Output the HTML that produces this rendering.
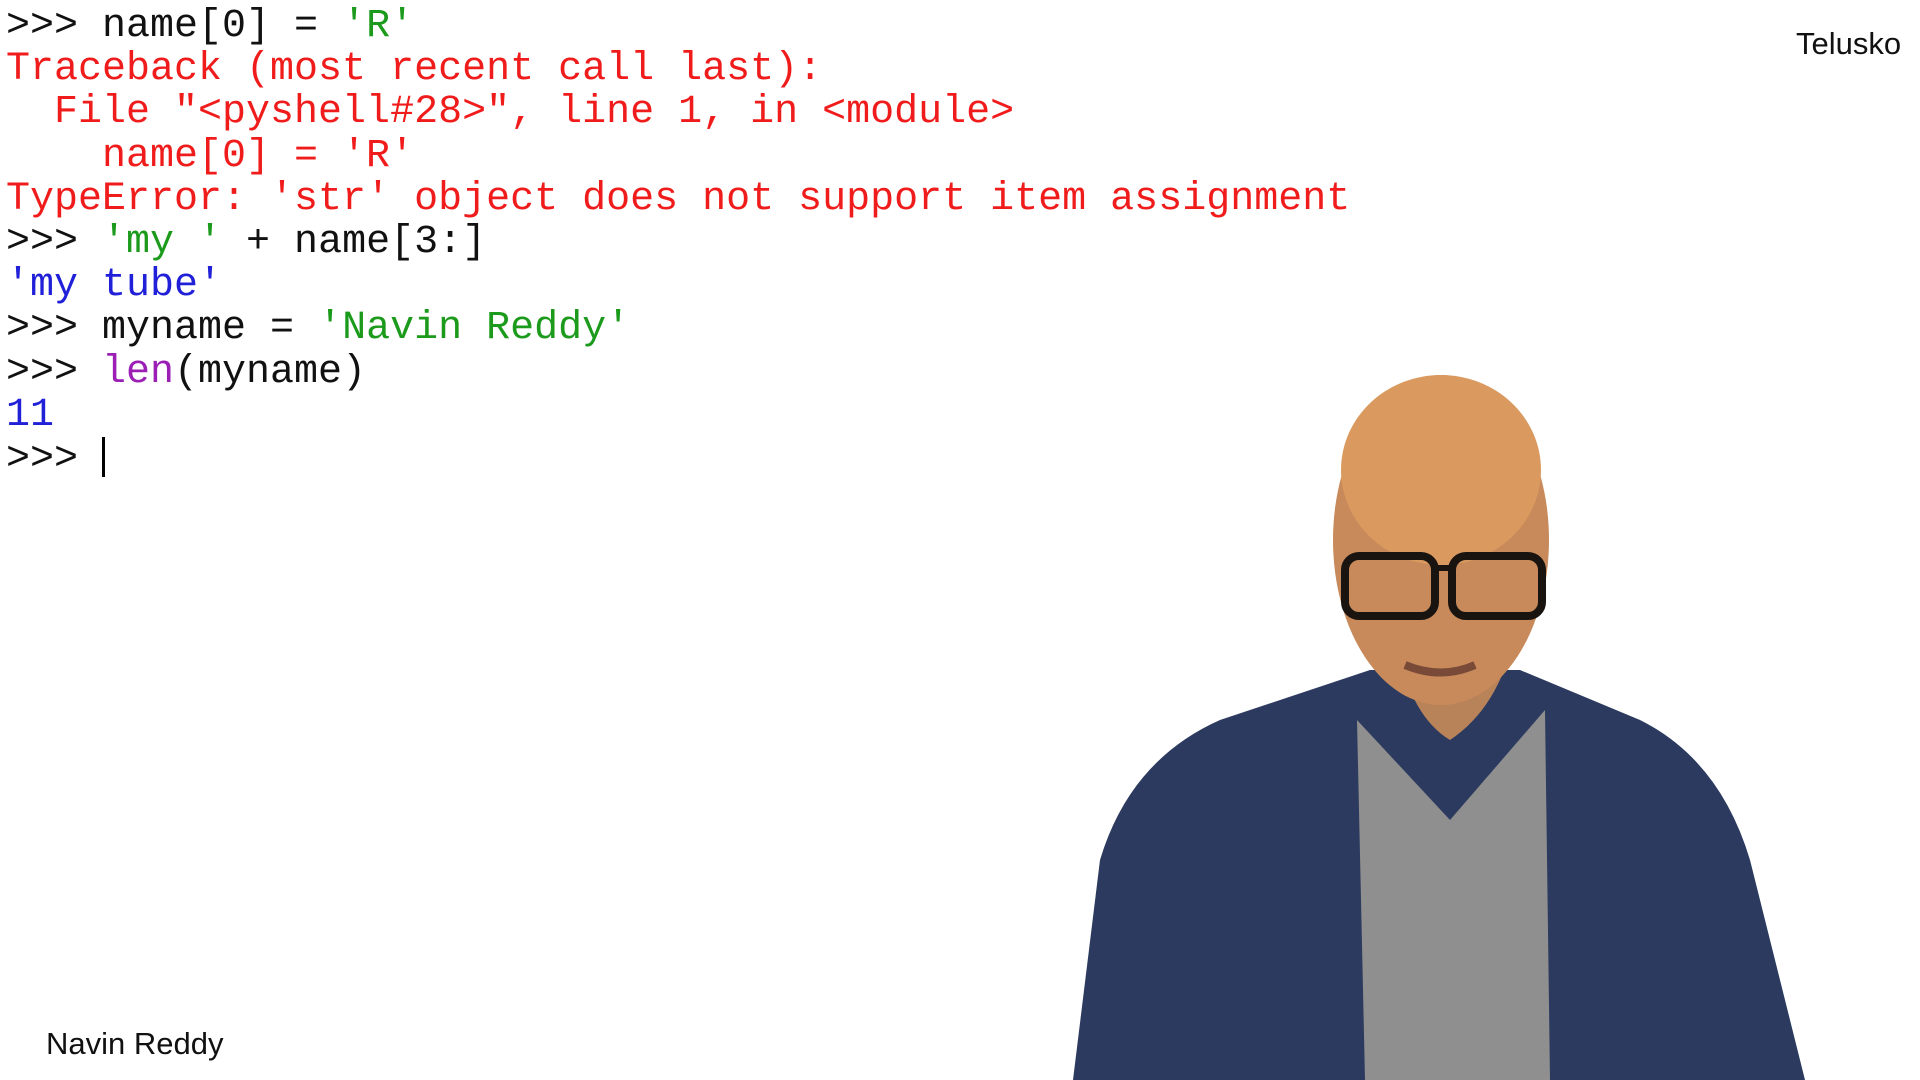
<!DOCTYPE html>
<html><head><meta charset="utf-8"><style>
html,body{margin:0;padding:0;width:1920px;height:1080px;background:#fff;overflow:hidden;position:relative}
pre{position:absolute;left:6px;top:5px;margin:0;font-family:"Liberation Mono",monospace;font-size:40px;line-height:43.2px;color:#111}
.r{color:#f01c1c}.g{color:#1b9a1b}.b{color:#2020d8}.p{color:#9b1fb5}
.lab{position:absolute;font-family:"Liberation Sans",sans-serif;font-size:31px;color:#111}
.cur{display:inline-block;width:3px;height:40px;background:#000;vertical-align:-8px}
</style></head><body>
<pre>&gt;&gt;&gt; name[0] = <span class="g">'R'</span>
<span class="r">Traceback (most recent call last):
  File "&lt;pyshell#28&gt;", line 1, in &lt;module&gt;
    name[0] = 'R'
TypeError: 'str' object does not support item assignment</span>
&gt;&gt;&gt; <span class="g">'my '</span> + name[3:]
<span class="b">'my tube'</span>
&gt;&gt;&gt; myname = <span class="g">'Navin Reddy'</span>
&gt;&gt;&gt; <span class="p">len</span>(myname)
<span class="b">11</span>
&gt;&gt;&gt; <span class="cur"></span></pre>
<div class="lab" style="left:1796px;top:26px">Telusko</div>
<div class="lab" style="left:46px;top:1026px">Navin Reddy</div>
<svg style="position:absolute;left:0;top:0" width="1920" height="1080">
<path d="M1073 1080 L1100 860 Q1130 760 1220 720 L1370 670 L1520 670 L1640 720 Q1720 760 1750 860 L1805 1080 Z" fill="#2b3a5e"/>
<path d="M1357 720 L1450 820 L1545 710 L1550 1080 L1365 1080 Z" fill="#8f8f8f"/>
<path d="M1390 600 Q1400 710 1450 740 Q1510 700 1520 600 Z" fill="#b9835a"/>
<ellipse cx="1441" cy="540" rx="108" ry="165" fill="#c88a5a"/>
<ellipse cx="1441" cy="470" rx="100" ry="95" fill="#d9995f"/>
<rect x="1345" y="556" width="90" height="60" rx="14" fill="none" stroke="#1a1410" stroke-width="8"/>
<rect x="1452" y="556" width="90" height="60" rx="14" fill="none" stroke="#1a1410" stroke-width="8"/>
<rect x="1433" y="565" width="20" height="6" fill="#1a1410"/>
<path d="M1405 665 Q1441 680 1475 665" stroke="#7a4a38" stroke-width="8" fill="none"/>
</svg>
</body></html>
